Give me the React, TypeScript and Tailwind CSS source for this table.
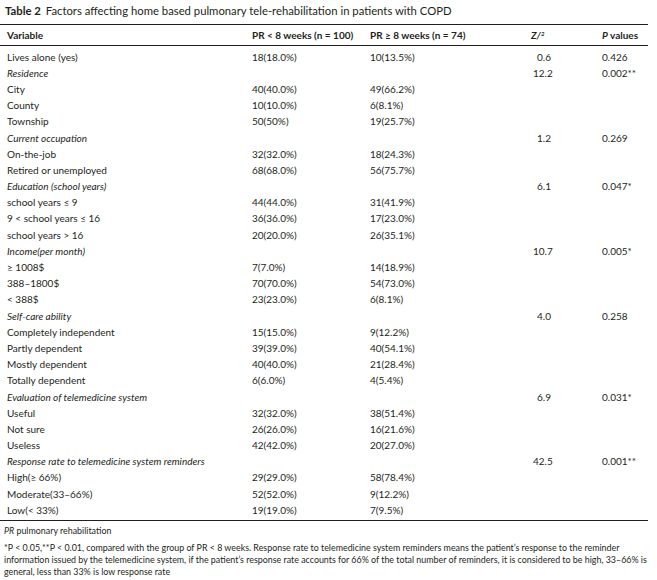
import React from 'react'

type Row = {
  label: string
  cat?: boolean
  a?: string
  b?: string
  z?: string
  p?: string
}

const rows: Row[] = [
  { label: 'Lives alone (yes)', a: '18(18.0%)', b: '10(13.5%)', z: '0.6', p: '0.426' },
  { label: 'Residence', cat: true, z: '12.2', p: '0.002**' },
  { label: 'City', a: '40(40.0%)', b: '49(66.2%)' },
  { label: 'County', a: '10(10.0%)', b: '6(8.1%)' },
  { label: 'Township', a: '50(50%)', b: '19(25.7%)' },
  { label: 'Current occupation', cat: true, z: '1.2', p: '0.269' },
  { label: 'On-the-job', a: '32(32.0%)', b: '18(24.3%)' },
  { label: 'Retired or unemployed', a: '68(68.0%)', b: '56(75.7%)' },
  { label: 'Education (school years)', cat: true, z: '6.1', p: '0.047*' },
  { label: 'school years ≤ 9', a: '44(44.0%)', b: '31(41.9%)' },
  { label: '9 < school years ≤ 16', a: '36(36.0%)', b: '17(23.0%)' },
  { label: 'school years > 16', a: '20(20.0%)', b: '26(35.1%)' },
  { label: 'Income(per month)', cat: true, z: '10.7', p: '0.005*' },
  { label: '≥ 1008$', a: '7(7.0%)', b: '14(18.9%)' },
  { label: '388–1800$', a: '70(70.0%)', b: '54(73.0%)' },
  { label: '< 388$', a: '23(23.0%)', b: '6(8.1%)' },
  { label: 'Self-care ability', cat: true, z: '4.0', p: '0.258' },
  { label: 'Completely independent', a: '15(15.0%)', b: '9(12.2%)' },
  { label: 'Partly dependent', a: '39(39.0%)', b: '40(54.1%)' },
  { label: 'Mostly dependent', a: '40(40.0%)', b: '21(28.4%)' },
  { label: 'Totally dependent', a: '6(6.0%)', b: '4(5.4%)' },
  { label: 'Evaluation of telemedicine system', cat: true, z: '6.9', p: '0.031*' },
  { label: 'Useful', a: '32(32.0%)', b: '38(51.4%)' },
  { label: 'Not sure', a: '26(26.0%)', b: '16(21.6%)' },
  { label: 'Useless', a: '42(42.0%)', b: '20(27.0%)' },
  { label: 'Response rate to telemedicine system reminders', cat: true, z: '42.5', p: '0.001**' },
  { label: 'High(≥ 66%)', a: '29(29.0%)', b: '58(78.4%)' },
  { label: 'Moderate(33–66%)', a: '52(52.0%)', b: '9(12.2%)' },
  { label: 'Low(< 33%)', a: '19(19.0%)', b: '7(9.5%)' },
]

const grid = 'grid grid-cols-[245px_120px_161px_69px_53px]'

export default function App() {
  return (
    <div className="w-[657px] h-[580px] bg-white text-[#231f20] font-['Lato',sans-serif] overflow-hidden">
      <div className="h-[24px] pl-[5px] pt-[4px] text-[11.3px] leading-[14px] whitespace-nowrap">
        <span className="font-bold">Table 2</span>
        <span className="ml-[5px]">Factors affecting home based pulmonary tele-rehabilitation in patients with COPD</span>
      </div>

      <div className="w-[648px] border-t-[1.5px] border-[#231f20]">
        <div className={`${grid} h-[21px] items-center text-[10px] font-bold border-b border-[#231f20]`}>
          <div className="pl-[7px]">Variable</div>
          <div className="pl-[7px] whitespace-nowrap">PR &lt; 8 weeks (n = 100)</div>
          <div className="pl-[5px] whitespace-nowrap">PR ≥ 8 weeks (n = 74)</div>
          <div className="pl-[5px] italic">
            Z/<sup className="text-[6px]">2</sup>
          </div>
          <div className="pl-[7px] whitespace-nowrap">
            <span className="italic">P</span> values
          </div>
        </div>

        <div className="pt-[3px] pb-[2px] border-b border-[#231f20] text-[10px]">
          {rows.map((r) => (
            <div key={r.label} className={`${grid} h-[16.2px] items-center whitespace-nowrap`}>
              <div className={`pl-[7px] ${r.cat ? 'italic' : ''}`}>{r.label}</div>
              <div className="pl-[7px]">{r.a}</div>
              <div className="pl-[5px]">{r.b}</div>
              <div className={parseFloat(r.z ?? '0') < 10 ? 'pl-[11px]' : 'pl-[7px]'}>{r.z}</div>
              <div className="pl-[7px]">{r.p}</div>
            </div>
          ))}
        </div>
      </div>

      <div className="pl-[4px] pt-[4px] text-[8.9px] leading-[12px] whitespace-nowrap">
        <div className="mb-[5px]">
          <span className="italic">PR</span> pulmonary rehabilitation
        </div>
        <div>
          *P &lt; 0.05,**P &lt; 0.01, compared with the group of PR &lt; 8 weeks. Response rate to telemedicine system reminders means the patient’s response to the reminder
        </div>
        <div>
          information issued by the telemedicine system, if the patient’s response rate accounts for 66% of the total number of reminders, it is considered to be high, 33–66% is
        </div>
        <div>general, less than 33% is low response rate</div>
      </div>
    </div>
  )
}
